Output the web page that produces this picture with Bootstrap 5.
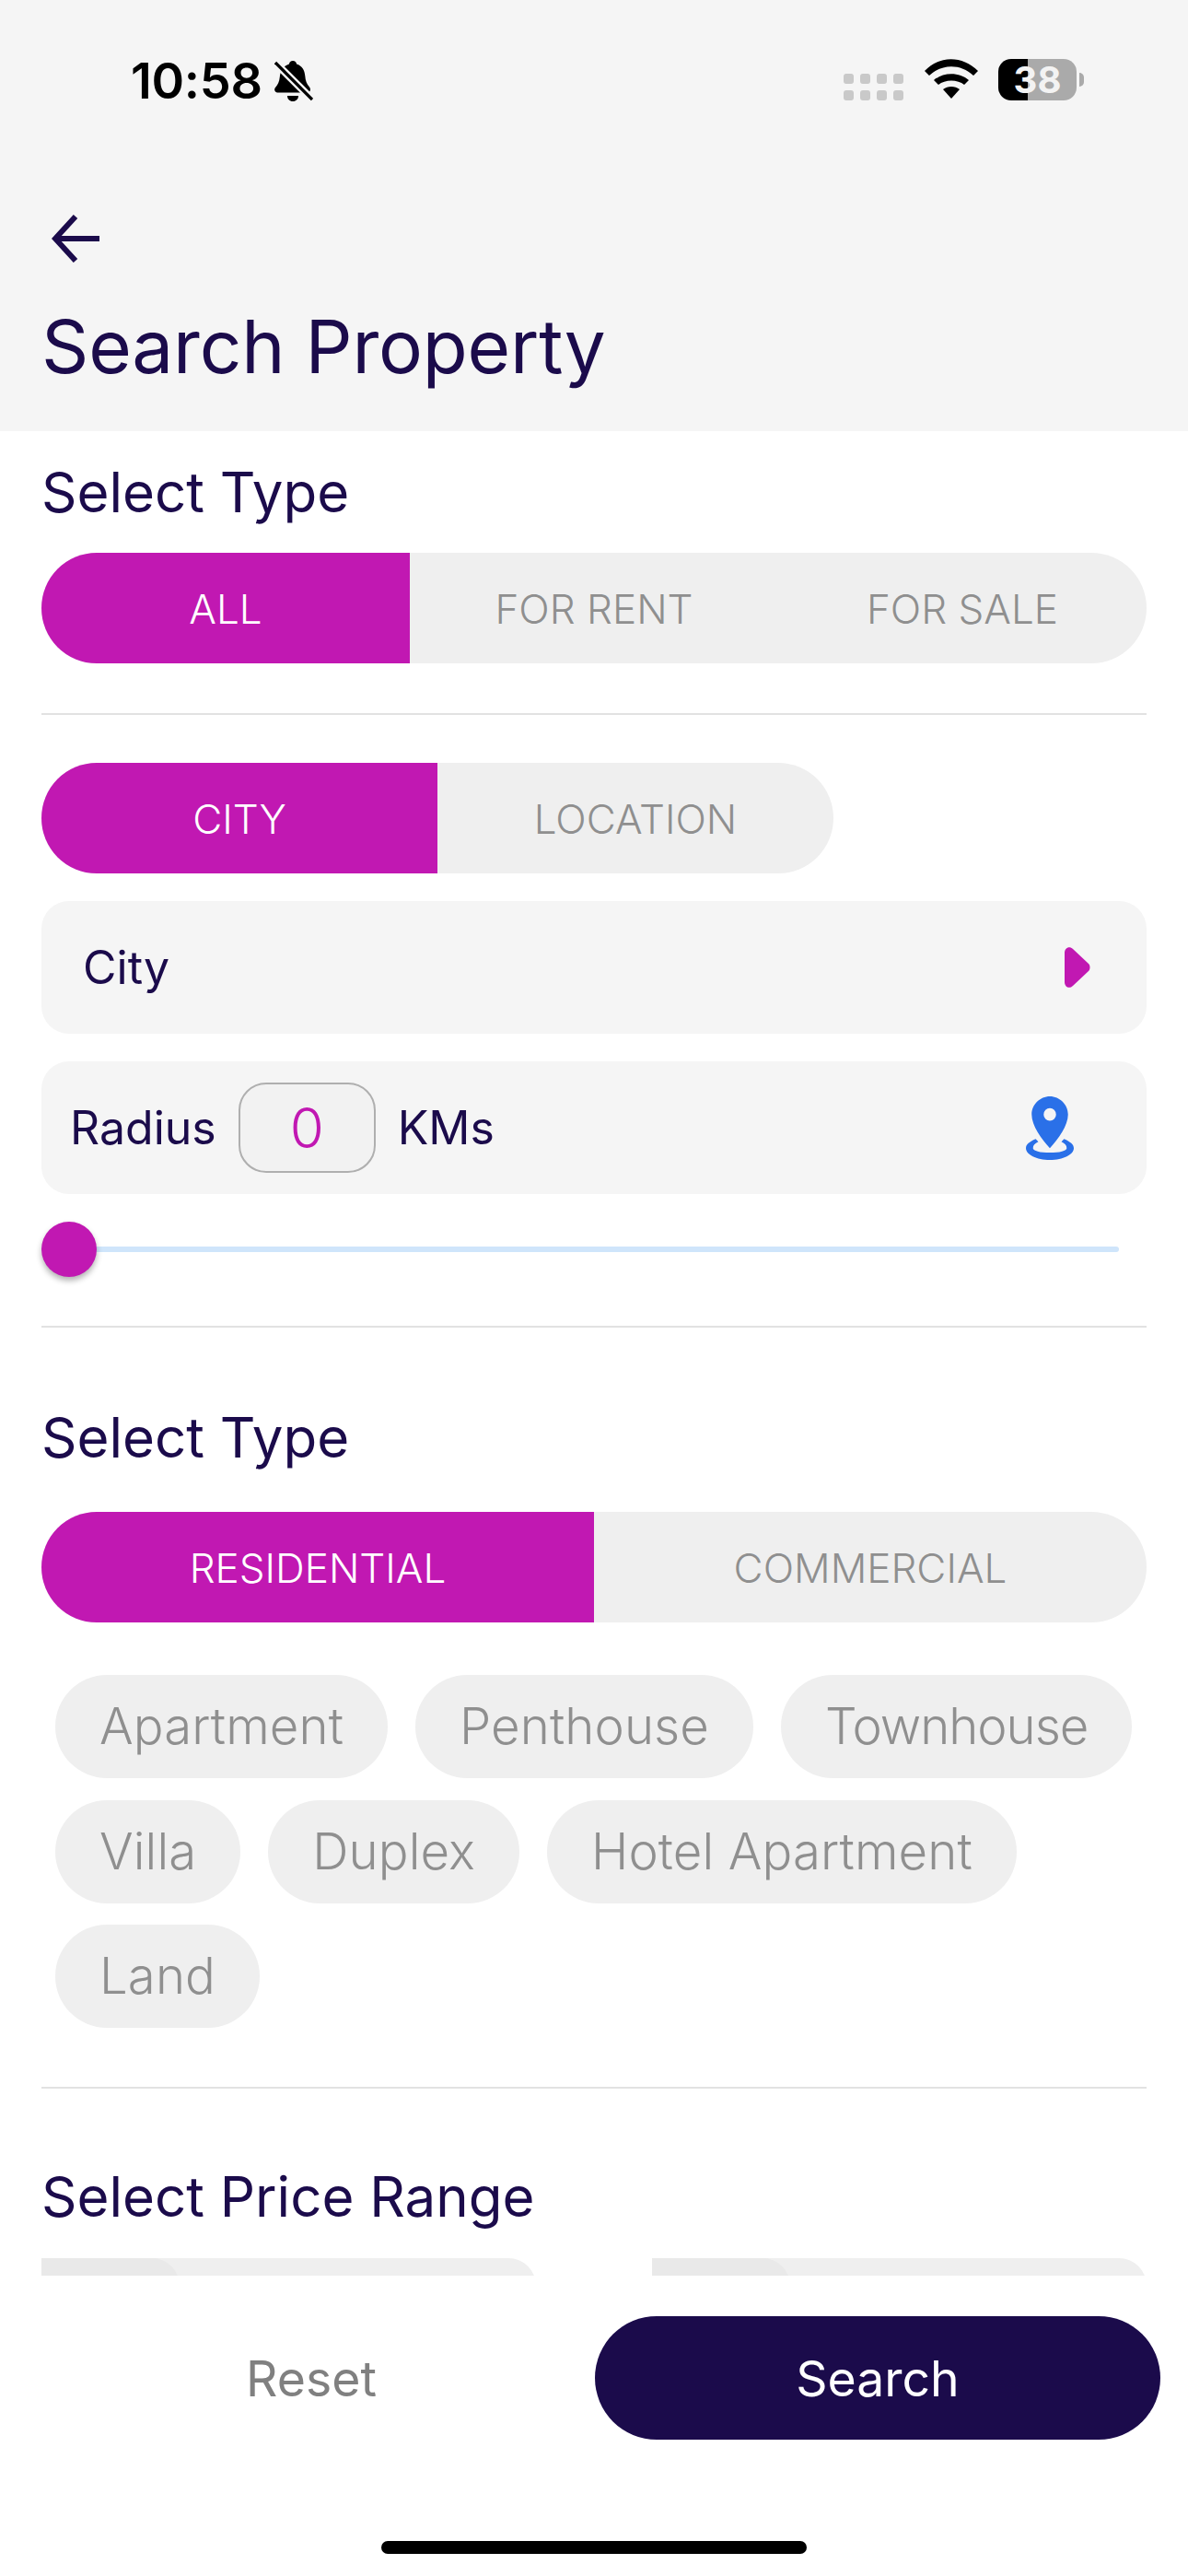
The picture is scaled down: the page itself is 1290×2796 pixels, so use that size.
<!DOCTYPE html>
<html lang="en">
<head>
<meta charset="utf-8">
<title>Search Property</title>
<link href="https://cdn.jsdelivr.net/npm/bootstrap@5.3.0/dist/css/bootstrap.min.css" rel="stylesheet">
<style>
:root { --ink:#1b0b4b; --mag:#c118b2; --soft:#f5f5f5; --seg:#efefef; --mute:#8f8f8f; }
html,body { margin:0; height:2796px; overflow:hidden; background:#fff; }
body { font-family:Inter,"Liberation Sans",sans-serif; color:var(--ink); width:1290px; }
.phone { height:2796px; }
.topbar { background:var(--soft); height:468px; padding:0 45px; flex:none; }
.statusrow { height:174px; position:relative; }
.clock { position:absolute; left:97px; top:59px; font-size:54px; line-height:58px; font-weight:600; color:#000; letter-spacing:-.3px; }
.bell { position:absolute; left:253px; top:66px; }
.dots { position:absolute; left:871px; top:80px; }
.wifi { position:absolute; left:958px; top:64px; }
.batt { position:absolute; left:1039px; top:64px; width:85px; height:45px; border-radius:14px; background:linear-gradient(90deg,#000 32px,#aaa 32px); color:#f3f3f3; font-size:40px; font-weight:700; line-height:46px; text-align:center; }
.batt::after { content:""; position:absolute; left:88px; top:15px; width:5px; height:15px; background:#aaa; border-radius:0 8px 8px 0; }
.backbtn { display:block; line-height:0; margin:59px 0 0 11px; }
.ttl { font-size:80px; line-height:96px; font-weight:400; margin:43px 0 0; letter-spacing:-.2px; }
.scrollarea { height:2002px; overflow:hidden; padding:0 45px; flex:none; }
.lbl { font-size:60px; line-height:72px; font-weight:400; margin:0; }
.seg { height:120px; border-radius:60px; background:var(--seg); overflow:hidden; font-size:44px; font-weight:350; color:var(--mute); }
.segitem { display:flex; align-items:center; justify-content:center; height:100%; padding-top:2px; }
.segitem.on { background:var(--mag); color:#fff; }
.w-type { width:1200px; }
.w-loc { width:860px; }
.seg-tri .segitem { width:400px; }
.seg-duo .segitem { width:430px; }
.seg-half .segitem { width:600px; }
.sep { border:0; border-top:2px solid #e2e2e2; opacity:1; margin:0; }
.fieldbox { height:144px; background:var(--soft); border-radius:30px; font-size:50px; font-weight:400; }
.radiusval { width:149px; height:98px; border:2px solid #afafaf; border-radius:30px; background:#f2f2f2; color:var(--mag); font-size:60px; font-weight:300; margin:0 24px 0 24px; }
.form-range.slide { height:60px; width:1170px; display:block; padding:0; }
.form-range.slide::-webkit-slider-runnable-track { height:6px; background:#cfe5fb; border-radius:3px; }
.form-range.slide::-webkit-slider-thumb { width:60px; height:60px; margin-top:-27px; background:var(--mag); border-radius:50%; box-shadow:0 4px 6px rgba(0,0,0,.3); -webkit-appearance:none; appearance:none; }
.chipwrap { gap:23.5px 30px; padding:0 0 0 15px; }
.chippill { height:112px; border-radius:56px; background:var(--seg); color:var(--mute); font-size:54.5px; font-weight:350; padding:0 48px; display:flex; align-items:center; letter-spacing:.1px; }
.chippill.tight { letter-spacing:-1px; }
.pricecell { width:537px; height:40px; background:var(--seg); border-radius:0 30px 0 0; position:relative; overflow:hidden; }
.pricecell::before { content:""; position:absolute; left:0; top:0; bottom:0; width:150px; background:#e9e9e9; border-radius:0 30px 0 0; }
.footbar { height:326px; background:#fff; position:relative; flex:none; }
.resetbtn { width:600px; height:134px; font-size:53.5px; color:#808080; border:0; background:transparent; padding:2px 0 0; margin-left:38px; }
.searchbtn { width:614px; height:134px; font-size:53.5px; color:#fff; background:var(--ink); border:0; border-radius:67px; padding:2px 0 0; margin-left:8px; }
.searchbtn:hover { background:var(--ink); color:#fff; }
.homebar { position:absolute; left:414px; top:288px; width:462px; height:14px; border-radius:7px; background:#000; }
.lbl-a { padding-top:30px; height:132px; }
.sep-a { margin-top:54px; }
.seg-b { margin-top:52px; }
.box-a { margin-top:30px; padding:0 60px 0 45px; }
.box-b { margin-top:30px; padding:0 79px 0 31px; }
.form-range.slide { margin-top:30px; }
.sep-b { margin-top:53px; }
.lbl-b { margin-top:83px; }
.seg-c { margin-top:45px; }
.chipwrap { margin-top:57px; }
.sep-c { margin-top:64px; }
.lbl-c { margin-top:81px; }
.price-row { margin-top:31px; }
.pt-btn { padding-top:44px; }
</style>
</head>
<body>
<div class="phone d-flex flex-column">
  <header class="topbar">
    <div class="statusrow">
      <span class="clock">10:58</span>
      <svg class="bell" width="42" height="44" viewBox="0 0 42 44" aria-hidden="true"><path d="M20 0c2.300 0 3.800 1.500 4 3.400 6 1.700 8.800 6.800 9.300 13 .4 5 1.500 8.500 4.700 12 1.500 1.800 1.300 4.800-1 6H3c-3-.6-3.600-3.600-2-5.500 2.500-2.800 4.300-6 4.800-11.500C6.300 11 10 5.300 16 3.400 16.200 1.500 17.700 0 20 0zM14 38h12c0 3.500-2.500 6-6 6s-6-2.500-6-6z" fill="#000"/><path d="M1 2l40 40" stroke="#f5f5f5" stroke-width="8"/><path d="M1 2l40 40" stroke="#000" stroke-width="3.200"/></svg>
      <svg class="dots" width="66" height="30" viewBox="0 0 66 30" aria-hidden="true"><g fill="#c9c9c9"><rect x="0" y="0" width="11" height="11" rx="3"/><rect x="18" y="0" width="11" height="11" rx="3"/><rect x="36" y="0" width="11" height="11" rx="3"/><rect x="54" y="0" width="11" height="11" rx="3"/><rect x="0" y="18" width="11" height="11" rx="3"/><rect x="18" y="18" width="11" height="11" rx="3"/><rect x="36" y="18" width="11" height="11" rx="3"/><rect x="54" y="18" width="11" height="11" rx="3"/></g></svg>
      <svg class="wifi" width="60" height="44" viewBox="0 0 60 44" aria-hidden="true"><g fill="#000"><path d="M1 13C17 -4 42 -4 59 13l-5 5C40 5 20 5 6 18z"/><path d="M11 23c10-9 28-9 38 0l-5 5c-7-6-21-6-28 0z"/><path d="M21 33c5-4 13-4 18 0L30 43z"/></g></svg>
      <div class="batt">38</div>
    </div>
    <a class="backbtn" href="#" aria-label="Back"><svg width="54" height="52" viewBox="0 0 54 52" aria-hidden="true"><path d="M52 26H4M26 2L4 26l22 24" fill="none" stroke="#1b0b4b" stroke-width="6"/></svg></a>
    <h1 class="ttl">Search Property</h1>
  </header>

  <main class="scrollarea">
    <p class="lbl lbl-a">Select Type</p>
    <div class="seg w-type d-flex seg-tri seg-a">
      <div class="segitem on">ALL</div>
      <div class="segitem">FOR RENT</div>
      <div class="segitem">FOR SALE</div>
    </div>
    <hr class="sep sep-a">
    <div class="seg w-loc d-flex seg-duo seg-b">
      <div class="segitem on">CITY</div>
      <div class="segitem">LOCATION</div>
    </div>
    <div class="fieldbox d-flex align-items-center justify-content-between box-a">
      <span>City</span>
      <svg width="30" height="46" viewBox="0 0 30 46" aria-hidden="true"><path d="M1 7c0-5 5-8 9-4l17 16c2 2 2 6 0 8L10 43c-4 4-9 1-9-4z" fill="#c118b2"/></svg>
    </div>
    <div class="fieldbox d-flex align-items-center box-b">
      <span>Radius</span>
      <div class="radiusval d-flex align-items-center justify-content-center">0</div>
      <span>KMs</span>
      <svg class="ms-auto" width="52" height="69" viewBox="0 0 54 70" preserveAspectRatio="none" aria-hidden="true"><path fill-rule="evenodd" d="M27 0c11 0 20.500 9 20.500 20 0 12-11 27-20.500 37C17.500 47 6.500 32 6.500 20 6.500 9 16 0 27 0zm0 13a7 7 0 1 0 0 14 7 7 0 0 0 0-14z" fill="#2a70e8"/><path d="M11 47C4 50 0 53 0 57c0 7 12 13 27 13s27-6 27-13c0-4-4-7-11-10l-3 3c4 2 6 4 6 7 0 3-8 5-19 5S8 60 8 57c0-3 2-5 6-7z" fill="#2a70e8"/></svg>
    </div>
    <input class="form-range slide" type="range" min="0" max="100" value="0" aria-label="Radius">
    <hr class="sep sep-b">
    <p class="lbl lbl-b">Select Type</p>
    <div class="seg w-type d-flex seg-half seg-c">
      <div class="segitem on">RESIDENTIAL</div>
      <div class="segitem">COMMERCIAL</div>
    </div>
    <div class="d-flex flex-wrap chipwrap">
      <div class="chippill">Apartment</div>
      <div class="chippill">Penthouse</div>
      <div class="chippill tight">Townhouse</div>
      <div class="chippill">Villa</div>
      <div class="chippill">Duplex</div>
      <div class="chippill">Hotel Apartment</div>
      <div class="chippill">Land</div>
    </div>
    <hr class="sep sep-c">
    <p class="lbl lbl-c">Select Price Range</p>
    <div class="d-flex justify-content-between price-row">
      <div class="pricecell"></div>
      <div class="pricecell"></div>
    </div>
  </main>

  <footer class="footbar">
    <div class="d-flex pt-btn">
      <button class="btn resetbtn" type="button">Reset</button>
      <button class="btn searchbtn" type="button">Search</button>
    </div>
    <div class="homebar"></div>
  </footer>
</div>
<script src="https://cdn.jsdelivr.net/npm/bootstrap@5.3.0/dist/js/bootstrap.bundle.min.js"></script>
</body>
</html>
